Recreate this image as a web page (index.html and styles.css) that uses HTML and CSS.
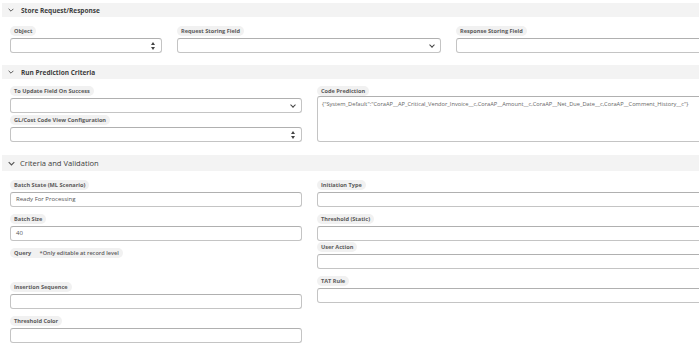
FILE: index.html
```html
<!DOCTYPE html>
<html lang="en">
<head>
  <meta charset="UTF-8" />
  <meta name="viewport" content="width=device-width, initial-scale=1.0" />
  <title>Prediction Settings</title>
  <link rel="stylesheet" href="styles.css">
</head>
<body>
  <div class="page">

    <div class="section-head">
      <svg class="chev" viewBox="0 0 10 6"><path d="M1 1l4 4 4-4" /></svg>
      <span>Store Request/Response</span>
    </div>
    <div class="row-three">
      <div class="field col-obj">
        <span class="pill">Object</span>
        <div class="box spin"></div>
      </div>
      <div class="field col-req">
        <span class="pill">Request Storing Field</span>
        <div class="box drop"></div>
      </div>
      <div class="field col-resp">
        <span class="pill">Response Storing Field</span>
        <div class="box"></div>
      </div>
    </div>

    <div class="section-head">
      <svg class="chev" viewBox="0 0 10 6"><path d="M1 1l4 4 4-4" /></svg>
      <span>Run Prediction Criteria</span>
    </div>
    <div class="row-two">
      <div class="col-left">
        <div class="field">
          <span class="pill">To Update Field On Success</span>
          <div class="box drop"></div>
        </div>
        <div class="field tight">
          <span class="pill">GL/Cost Code View Configuration</span>
          <div class="box spin"></div>
        </div>
      </div>
      <div class="col-right">
        <div class="field">
          <span class="pill">Code Prediction</span>
          <div class="box area">{"System_Default":"CoraAP__AP_Critical_Vendor_Invoice__c,CoraAP__Amount__c,CoraAP__Net_Due_Date__c,CoraAP__Comment_History__c"}</div>
        </div>
      </div>
    </div>

    <div class="section-head big">
      <svg class="chev" viewBox="0 0 10 6"><path d="M1 1l4 4 4-4" /></svg>
      <span>Criteria and Validation</span>
    </div>
    <div class="row-two criteria">
      <div class="col-left">
        <div class="field">
          <span class="pill">Batch State (ML Scenario)</span>
          <div class="box">Ready For Processing</div>
        </div>
        <div class="field">
          <span class="pill">Batch Size</span>
          <div class="box">40</div>
        </div>
        <div class="field query">
          <span class="pill">Query <em>*Only editable at record level</em></span>
        </div>
        <div class="field">
          <span class="pill">Insertion Sequence</span>
          <div class="box"></div>
        </div>
        <div class="field">
          <span class="pill">Threshold Color</span>
          <div class="box"></div>
        </div>
      </div>
      <div class="col-right">
        <div class="field">
          <span class="pill">Initiation Type</span>
          <div class="box"></div>
        </div>
        <div class="field">
          <span class="pill">Threshold (Static)</span>
          <div class="box"></div>
        </div>
        <div class="field close">
          <span class="pill">User Action</span>
          <div class="box"></div>
        </div>
        <div class="field">
          <span class="pill">TAT Rule</span>
          <div class="box"></div>
        </div>
      </div>
    </div>

  </div>
</body>
</html>
```

FILE: styles.css
```css
html, body {
  margin: 0;
  overflow: hidden;
  background: #fff;
}
body {
  font-family: "Open Sans", "Noto Sans", Arial, sans-serif;
  color: #4a4a4a;
}
.page {
  width: 720px;
  padding: 3px 0 0 2px;
}
.section-head {
  display: flex;
  align-items: center;
  gap: 7px;
  height: 14px;
  padding-left: 6px;
  background: #f3f3f3;
  font-size: 6.5px;
  font-weight: 700;
  color: #3c3c3c;
}
.section-head.big {
  height: 16px;
  font-size: 7.6px;
  font-weight: 400;
  gap: 5px;
}
.chev {
  width: 6px;
  height: 4px;
  fill: none;
  stroke: #555;
  stroke-width: 1.6;
}
.section-head.big .chev {
  width: 7px;
  height: 5px;
}
.row-three {
  display: flex;
  gap: 15px;
  padding: 9px 0 5px 8px;
}
.col-obj { width: 152px; }
.col-req { width: 264px; }
.col-resp { width: 260px; }
.row-two {
  display: flex;
  gap: 15px;
  padding: 7px 0 6px 8px;
}
.row-two.criteria {
  padding-top: 9px;
}
.col-left {
  width: 292px;
  display: flex;
  flex-direction: column;
}
.col-right {
  width: 400px;
  display: flex;
  flex-direction: column;
}
.field {
  display: flex;
  flex-direction: column;
  align-items: flex-start;
  gap: 2px;
  margin-bottom: 7px;
}
.field.tight {
  margin-top: -5px;
}
.field.close {
  margin-top: -6px;
}
.pill {
  height: 10px;
  line-height: 10px;
  padding: 0 4px;
  border-radius: 5px;
  background: #f1f1f1;
  font-size: 5.6px;
  font-weight: 700;
  color: #5a5a5a;
}
.pill em {
  font-style: normal;
  margin-left: 7px;
  font-weight: 600;
}
.field.query {
  margin-bottom: 24px;
}
.box {
  position: relative;
  box-sizing: border-box;
  width: 100%;
  height: 15px;
  border: 1px solid #c4c4c4;
  border-top-color: #b0b0b0;
  border-radius: 3px;
  padding: 0 5px;
  font-size: 6px;
  line-height: 13px;
  color: #555;
  background: #fff;
}
.box.area {
  height: 46px;
  margin-top: -2px;
  line-height: 10px;
  padding: 2px 4px;
  font-size: 5.7px;
  white-space: nowrap;
  overflow: hidden;
  color: #666;
}
.box.drop::after {
  content: "";
  position: absolute;
  right: 6px;
  top: 4px;
  width: 3px;
  height: 3px;
  border-right: 1.3px solid #444;
  border-bottom: 1.3px solid #444;
  transform: rotate(45deg);
}
.box.spin::before,
.box.spin::after {
  content: "";
  position: absolute;
  right: 6px;
  border-left: 2px solid transparent;
  border-right: 2px solid transparent;
}
.box.spin::before {
  top: 3px;
  border-bottom: 3px solid #444;
}
.box.spin::after {
  top: 8px;
  border-top: 3px solid #444;
}
```
